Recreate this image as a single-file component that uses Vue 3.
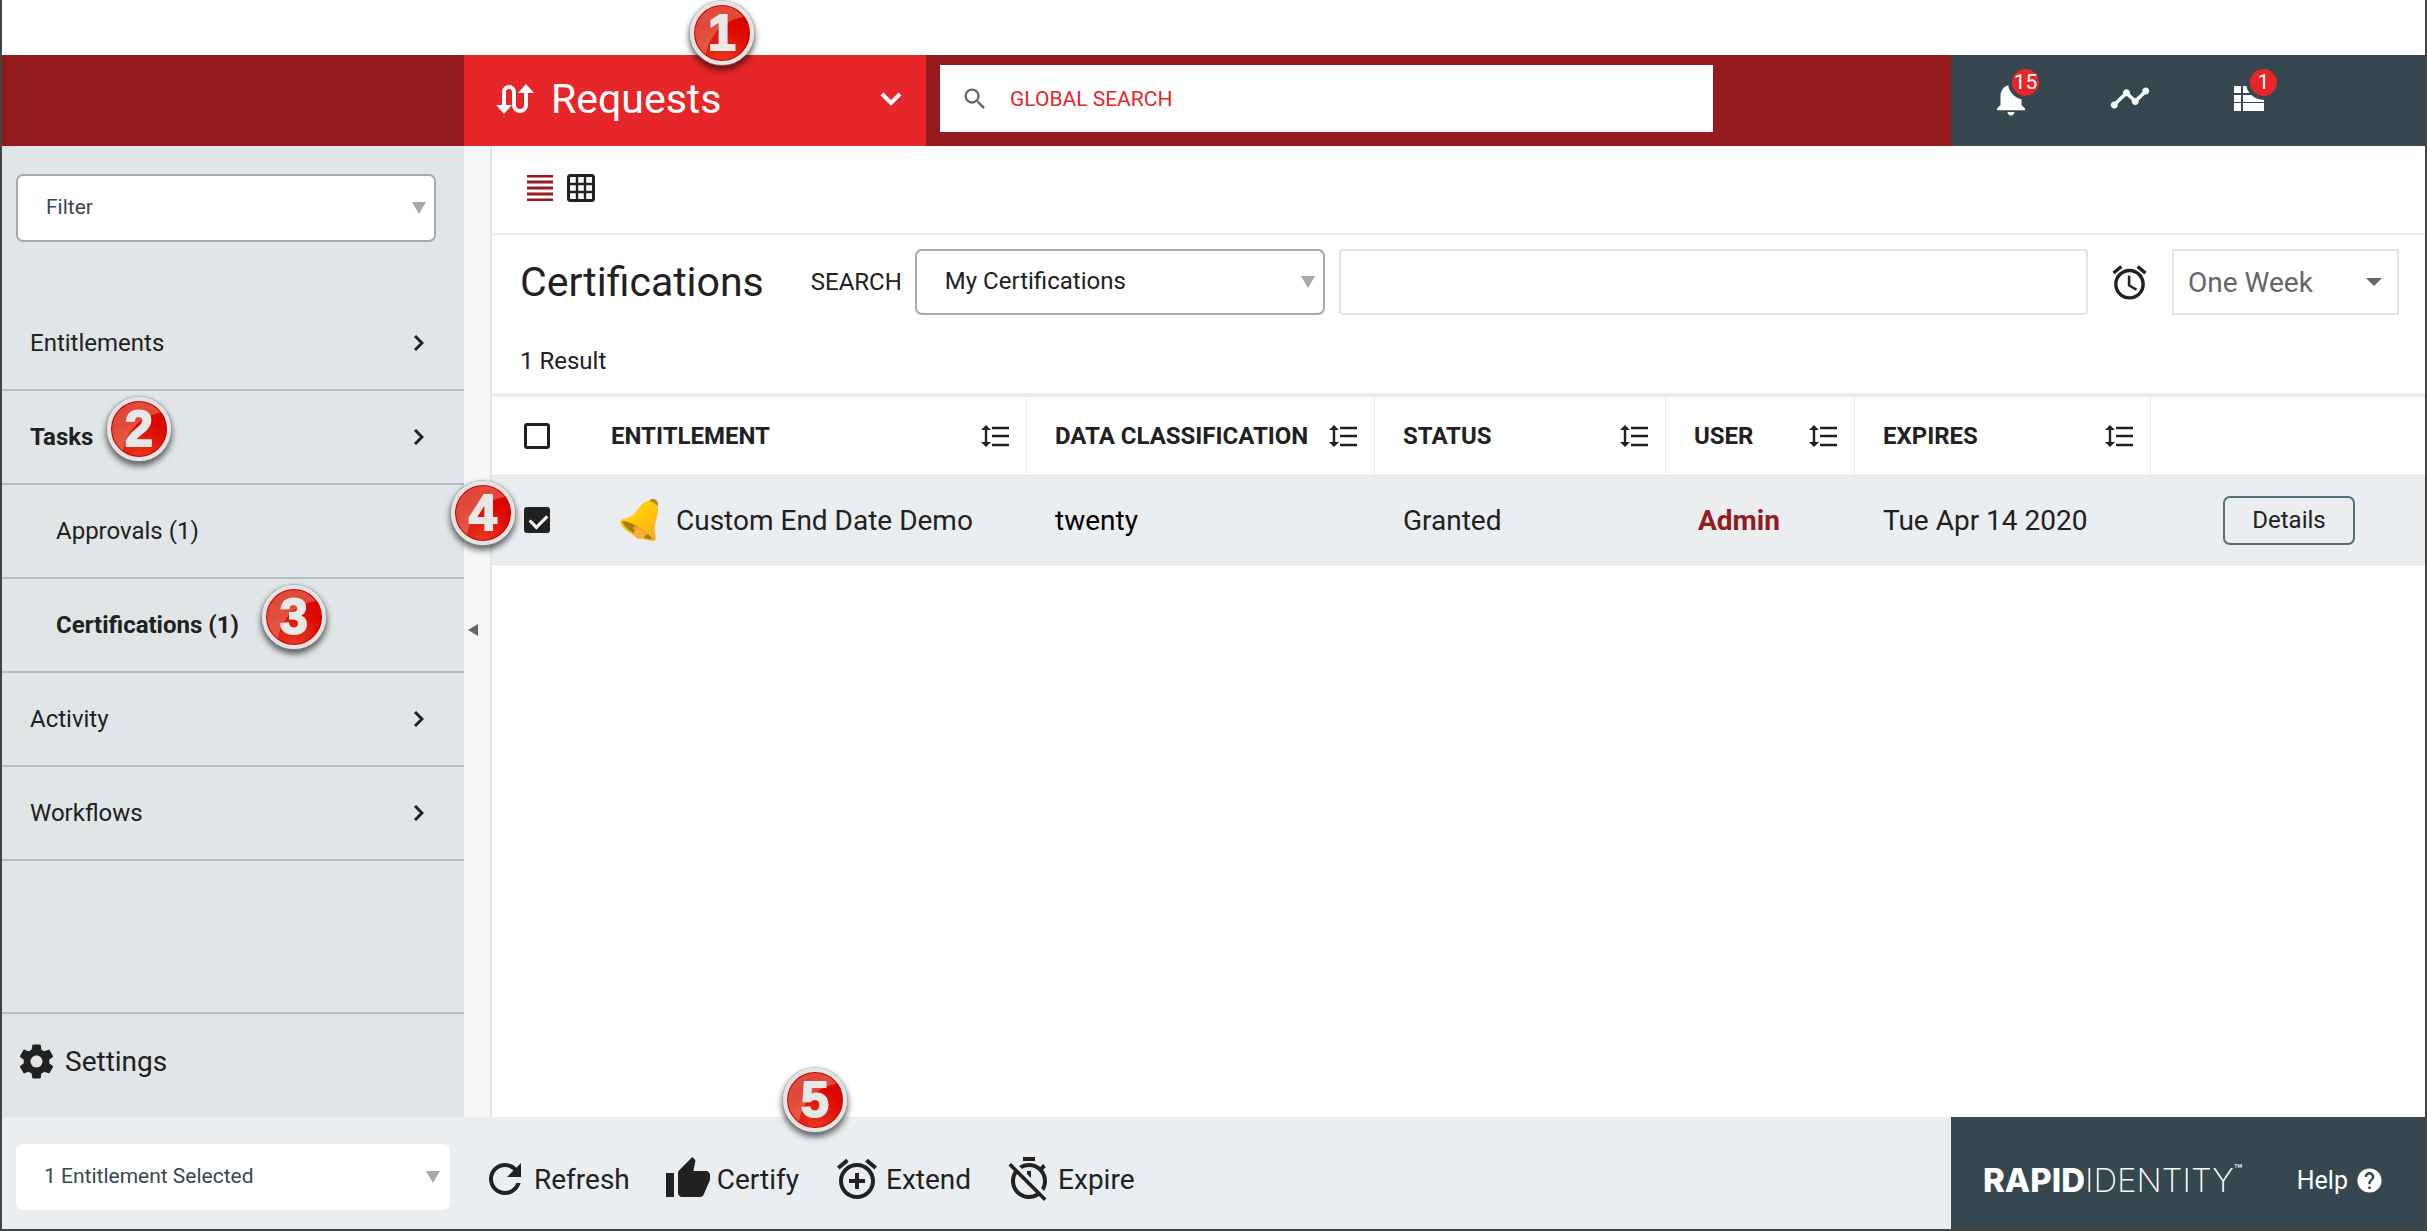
<script setup>
import { ref } from 'vue'

const navItems = [
  { label: 'Entitlements', chevron: true },
  { label: 'Tasks', chevron: true, strong: true, step: 2 },
  { label: 'Approvals (1)', child: true },
  { label: 'Certifications (1)', child: true, strong: true, step: 3 },
  { label: 'Activity', chevron: true },
  { label: 'Workflows', chevron: true }
]

const columns = [
  { label: 'ENTITLEMENT', cls: 'col-entitlement' },
  { label: 'DATA CLASSIFICATION', cls: 'col-class' },
  { label: 'STATUS', cls: 'col-status' },
  { label: 'USER', cls: 'col-user' },
  { label: 'EXPIRES', cls: 'col-expires' }
]

const actions = [
  {
    label: 'Refresh',
    path: 'M17.65 6.35C16.2 4.9 14.21 4 12 4c-4.42 0-7.99 3.58-7.99 8s3.57 8 7.99 8c3.73 0 6.84-2.55 7.73-6h-2.08c-.82 2.33-3.04 4-5.65 4-3.31 0-6-2.69-6-6s2.69-6 6-6c1.66 0 3.14.69 4.22 1.78L13 11h7V4l-2.35 2.35z'
  },
  {
    label: 'Certify',
    step: 5,
    path: 'M1 21h4V9H1v12zm22-11c0-1.1-.9-2-2-2h-6.31l.95-4.57.03-.32c0-.41-.17-.79-.44-1.06L14.17 1 7.59 7.59C7.22 7.95 7 8.45 7 9v10c0 1.1.9 2 2 2h9c.83 0 1.54-.5 1.84-1.22l3.02-7.05c.09-.23.14-.47.14-.73v-2z'
  },
  {
    label: 'Extend',
    path: 'M7.88 3.39L6.6 1.86 2 5.71l1.29 1.53 4.59-3.85zM22 5.72l-4.6-3.86-1.29 1.53 4.6 3.86L22 5.72zM12 4c-4.97 0-9 4.03-9 9s4.02 9 9 9c4.97 0 9-4.03 9-9s-4.03-9-9-9zm0 16c-3.87 0-7-3.13-7-7s3.13-7 7-7 7 3.13 7 7-3.13 7-7 7zm1-11h-2v3H8v2h3v3h2v-3h3v-2h-3V9z'
  },
  {
    label: 'Expire',
    path: 'M19.04 4.55l-1.42 1.42C16.07 4.74 14.12 4 12 4c-1.83 0-3.53.55-4.95 1.48l1.46 1.46C9.53 6.35 10.73 6 12 6c3.87 0 7 3.13 7 7 0 1.27-.35 2.47-.94 3.49l1.45 1.45C20.45 16.53 21 14.83 21 13c0-2.12-.74-4.07-1.97-5.61l1.42-1.42-1.41-1.42zM15 1H9v2h6V1zm-4 8.44l2 2V8h-2v1.44zM3.02 4L1.75 5.27 4.5 8.03C3.55 9.45 3 11.16 3 13c0 4.97 4.02 9 9 9 1.84 0 3.55-.55 4.98-1.5l2.5 2.5 1.27-1.27-7.71-7.71L3.02 4zM12 20c-3.87 0-7-3.13-7-7 0-1.28.35-2.48.95-3.52l9.56 9.56c-1.03.61-2.23.96-3.51.96z'
  }
]

const allChecked = ref(false)
const rowChecked = ref(true)
</script>

<template>
  <div class="page">
    <header class="topbar">
      <div class="brand"></div>
      <button class="module" type="button">
        <svg class="module-icon" viewBox="0 0 38 30" aria-hidden="true">
          <path d="M8 23V8a5 5 0 0 1 10 0v13a6 6 0 0 0 12 0V7" fill="none" stroke="#fff" stroke-width="4" />
          <path d="M0 21h16l-8 9zM22 9h16L30 0z" fill="#fff" />
        </svg>
        <span>Requests</span>
        <svg class="module-chevron" viewBox="0 0 22 14" aria-hidden="true">
          <path d="M2 2l9 9 9-9" fill="none" stroke="#fff" stroke-width="4" />
        </svg>
        <span class="step step-1">1</span>
      </button>
      <div class="search-zone">
        <label class="global-search">
          <svg viewBox="0 0 24 24" aria-hidden="true">
            <path fill="#666" d="M15.5 14h-.79l-.28-.27C15.41 12.59 16 11.11 16 9.5 16 5.91 13.09 3 9.5 3S3 5.91 3 9.5 5.91 16 9.5 16c1.61 0 3.09-.59 4.23-1.57l.27.28v.79l5 4.99L20.49 19l-4.99-5zm-6 0C7.01 14 5 11.99 5 9.5S7.01 5 9.5 5 14 7.01 14 9.5 11.99 14 9.5 14z" />
          </svg>
          <input type="text" placeholder="GLOBAL SEARCH" aria-label="Global search" />
        </label>
      </div>
      <div class="tools">
        <button class="tool" type="button" aria-label="Notifications">
          <svg viewBox="0 0 24 24" aria-hidden="true">
            <path fill="#fff" d="M12 22c1.1 0 2-.9 2-2h-4c0 1.1.89 2 2 2zm6-6v-5c0-3.07-1.64-5.64-4.5-6.32V4c0-.83-.67-1.5-1.5-1.5s-1.5.67-1.5 1.5v.68C7.63 5.36 6 7.92 6 11v5l-2 2v1h16v-1l-2-2z" />
          </svg>
          <span class="badge">15</span>
        </button>
        <button class="tool" type="button" aria-label="Activity">
          <svg viewBox="0 0 24 24" aria-hidden="true">
            <path fill="#fff" d="M23 8c0 1.1-.9 2-2 2-.18 0-.35-.02-.51-.07l-3.56 3.55c.05.16.07.34.07.52 0 1.1-.9 2-2 2s-2-.9-2-2c0-.18.02-.36.07-.52l-2.55-2.55c-.16.05-.34.07-.52.07s-.36-.02-.52-.07l-4.55 4.56c.05.16.07.33.07.51 0 1.1-.9 2-2 2s-2-.9-2-2 .9-2 2-2c.18 0 .35.02.51.07l4.56-4.55C8.02 9.36 8 9.18 8 9c0-1.1.9-2 2-2s2 .9 2 2c0 .18-.02.36-.07.52l2.55 2.55c.16-.05.34-.07.52-.07s.36.02.52.07l3.55-3.56C19.02 8.35 19 8.18 19 8c0-1.1.9-2 2-2s2 .9 2 2z" />
          </svg>
        </button>
        <button class="tool" type="button" aria-label="Queue">
          <svg viewBox="0 0 42 42" aria-hidden="true">
            <path fill="#fff" d="M6 9h7v7H6zM15 9h21v7H15zM6 18h7v7H6zM15 18h21v7H15zM6 26h7v8H6zM15 26h21v8H15z" />
          </svg>
          <span class="badge">1</span>
        </button>
      </div>
    </header>

    <div class="body">
      <nav class="sidebar">
        <div class="select filter">
          <select aria-label="Filter">
            <option>Filter</option>
          </select>
        </div>
        <ul class="nav">
          <li v-for="item in navItems" :key="item.label">
            <a href="#" :class="{ child: item.child, strong: item.strong }">
              <span>{{ item.label }}</span>
              <svg v-if="item.chevron" viewBox="0 0 10 16" aria-hidden="true">
                <path d="M1 1l7 7-7 7" fill="none" stroke="#212121" stroke-width="3" />
              </svg>
            </a>
            <span v-if="item.step" class="step" :class="'step-' + item.step">{{ item.step }}</span>
          </li>
        </ul>
        <a href="#" class="settings">
          <svg viewBox="0 0 24 24" aria-hidden="true">
            <path fill="#212121" d="M19.43 12.98c.04-.32.07-.64.07-.98s-.03-.66-.07-.98l2.11-1.65c.19-.15.24-.42.12-.64l-2-3.46c-.12-.22-.39-.3-.61-.22l-2.49 1c-.52-.4-1.08-.73-1.69-.98l-.38-2.65C14.46 2.18 14.25 2 14 2h-4c-.25 0-.46.18-.49.42l-.38 2.65c-.61.25-1.17.59-1.69.98l-2.49-1c-.23-.09-.49 0-.61.22l-2 3.46c-.13.22-.07.49.12.64l2.11 1.65c-.04.32-.07.65-.07.98s.03.66.07.98l-2.11 1.65c-.19.15-.24.42-.12.64l2 3.46c.12.22.39.3.61.22l2.49-1c.52.4 1.08.73 1.69.98l.38 2.65c.03.24.24.42.49.42h4c.25 0 .46-.18.49-.42l.38-2.65c.61-.25 1.17-.59 1.69-.98l2.49 1c.23.09.49 0 .61-.22l2-3.46c.12-.22.07-.49-.12-.64l-2.11-1.65zM12 15.5c-1.93 0-3.5-1.57-3.5-3.5s1.57-3.5 3.5-3.5 3.5 1.57 3.5 3.5-1.57 3.5-3.5 3.5z" />
          </svg>
          <span>Settings</span>
        </a>
      </nav>
      <button class="collapse" type="button" aria-label="Collapse sidebar">
        <svg viewBox="0 0 10 12" aria-hidden="true"><path d="M10 0v12L0 6z" fill="#666" /></svg>
      </button>

      <main class="content">
        <div class="view-switch">
          <button type="button" aria-label="List view">
            <svg class="list-icon" viewBox="0 0 26 26" aria-hidden="true">
              <path d="M0 1h26M0 7h26M0 13h26M0 19h26M0 25h26" stroke="#961b1e" stroke-width="3" />
            </svg>
          </button>
          <button type="button" aria-label="Grid view">
            <svg class="grid-icon" viewBox="0 0 28 28" aria-hidden="true">
              <rect x="1.5" y="1.5" width="25" height="25" rx="2" fill="none" stroke="#212121" stroke-width="3" />
              <path d="M10 1v26M18 1v26M1 10h26M1 18h26" stroke="#212121" stroke-width="2.4" />
            </svg>
          </button>
        </div>

        <section class="heading">
          <div class="search-row">
            <h1>Certifications</h1>
            <label class="search-label" for="scope">SEARCH</label>
            <div class="select scope">
              <select id="scope">
                <option>My Certifications</option>
              </select>
            </div>
            <input class="query" type="text" aria-label="Search text" />
            <svg class="alarm" viewBox="0 0 24 24" aria-hidden="true">
              <path fill="#212121" d="M22 5.72l-4.6-3.86-1.29 1.53 4.6 3.86L22 5.72zM7.88 3.39L6.6 1.86 2 5.71l1.29 1.53 4.59-3.85zM12.5 8H11v6l4.75 2.85.75-1.23-4-2.37V8zM12 4c-4.97 0-9 4.03-9 9s4.02 9 9 9c4.97 0 9-4.03 9-9s-4.03-9-9-9zm0 16c-3.87 0-7-3.13-7-7s3.13-7 7-7 7 3.13 7 7-3.13 7-7 7z" />
            </svg>
            <div class="select period">
              <select aria-label="Period">
                <option>One Week</option>
              </select>
            </div>
          </div>
          <p class="count">1 Result</p>
        </section>

        <table>
          <colgroup>
            <col class="col-check" />
            <col v-for="c in columns" :key="c.label" :class="c.cls" />
            <col />
          </colgroup>
          <thead>
            <tr>
              <th class="check"><input v-model="allChecked" type="checkbox" aria-label="Select all" /></th>
              <th v-for="c in columns" :key="c.label" class="sortable">
                <div class="th-inner">
                  <span>{{ c.label }}</span>
                  <button type="button" :aria-label="'Sort by ' + c.label">
                    <svg viewBox="0 0 28 22" aria-hidden="true">
                      <path d="M5 3v16" stroke="#212121" stroke-width="2.4" />
                      <path d="M0 5l5-5 5 5zM0 17l5 5 5-5z" fill="#212121" />
                      <path d="M11 3h17M11 11h17M11 20h17" stroke="#212121" stroke-width="2.4" />
                    </svg>
                  </button>
                </div>
              </th>
              <th></th>
            </tr>
          </thead>
          <tbody>
            <tr>
              <td class="check">
                <input v-model="rowChecked" type="checkbox" aria-label="Select Custom End Date Demo" />
                <span class="step step-4">4</span>
              </td>
              <td>
                <div class="entitlement">
                  <svg viewBox="0 0 38 42" aria-hidden="true">
                    <defs>
                      <linearGradient id="bell-body" x1="0" y1="0" x2="1" y2="1">
                        <stop offset="0" stop-color="#fdd835" />
                        <stop offset=".45" stop-color="#ffca05" />
                        <stop offset="1" stop-color="#f9a825" />
                      </linearGradient>
                    </defs>
                    <circle cx="33" cy="5" r="5" fill="#b08a1c" />
                    <path d="M25 3c5-3 13 1 13 8 0 8-5 14-3 24 1 4 1 7-2 7C21 41 3 33 0 23c0-3 3-3 7-4C16 17 18 7 25 3z" fill="url(#bell-body)" />
                    <path d="M2 22c6-1 28 11 30 18-8 1-27-8-30-18z" fill="#a67c12" />
                    <circle cx="20" cy="34" r="6" fill="#fbb03b" />
                    <path d="M14 27c5 1 12 5 15 8l-4 1c-3-4-8-6-12-6z" fill="#f9a825" />
                  </svg>
                  <span>Custom End Date Demo</span>
                </div>
              </td>
              <td class="dark">twenty</td>
              <td>Granted</td>
              <td><a href="#" class="user">Admin</a></td>
              <td>Tue Apr 14 2020</td>
              <td class="action-cell"><button class="details" type="button">Details</button></td>
            </tr>
          </tbody>
        </table>
      </main>
    </div>

    <footer class="footer">
      <div class="actions">
        <div class="select selected">
          <select aria-label="Selection">
            <option>1 Entitlement Selected</option>
          </select>
        </div>
        <button v-for="a in actions" :key="a.label" class="action" type="button">
          <svg viewBox="0 0 24 24" aria-hidden="true"><path fill="#212121" :d="a.path" /></svg>
          <span>{{ a.label }}</span>
          <span v-if="a.step" class="step step-5">{{ a.step }}</span>
        </button>
      </div>
      <div class="about">
        <div class="logo"><b>RAPID</b><span>IDENTITY</span><sup>™</sup></div>
        <a href="#" class="help">
          <span>Help</span>
          <svg viewBox="0 0 24 24" aria-hidden="true">
            <path fill="#fff" d="M12 2C6.48 2 2 6.48 2 12s4.48 10 10 10 10-4.48 10-10S17.52 2 12 2zm1 17h-2v-2h2v2zm2.07-7.75l-.9.92C13.45 12.9 13 13.5 13 15h-2v-.5c0-1.1.45-2.1 1.17-2.83l1.24-1.26c.37-.36.59-.86.59-1.41 0-1.1-.9-2-2-2s-2 .9-2 2H8c0-2.21 1.79-4 4-4s4 1.79 4 4c0 .88-.36 1.68-.93 2.25z" />
          </svg>
        </a>
      </div>
    </footer>
  </div>
</template>

<style>
body {
  background: #fff;
}
</style>

<style scoped>
* {
  box-sizing: border-box;
}

.page {
  display: flex;
  flex-direction: column;
  min-height: 100vh;
  padding-top: 55px;
  border: 2px solid #444;
  border-top: 0;
  color: #212121;
  font-family: Roboto, sans-serif;
  font-size: 24px;
}

button,
input,
select {
  margin: 0;
  padding: 0;
  border: 0;
  background: none;
  color: inherit;
  font: inherit;
}

a {
  color: inherit;
  text-decoration: none;
}

svg {
  display: block;
  flex: none;
}

/* Numbered call-outs */
.step {
  position: absolute;
  z-index: 2;
  display: flex;
  align-items: center;
  justify-content: center;
  width: 64px;
  height: 64px;
  border: 4px solid #e4e4e4;
  border-radius: 50%;
  background:
    radial-gradient(circle at 100% 100%, transparent 44px, rgba(230, 170, 140, 0.42) 45px) 0 0 / 100% 100%,
    radial-gradient(circle at 50% 100%, #e8391c, #dd0500 60%);
  box-shadow:
    inset 0 0 0 1px #c40000,
    0 0 1px 1px rgba(150, 150, 150, 0.5),
    0 4px 6px 1px rgba(0, 0, 0, 0.6);
  color: #e8e8e8;
  font: bold 50px/56px "Liberation Sans", sans-serif;
  -webkit-text-stroke: 2px #e8e8e8;
}

.step-1 {
  top: -54px;
  left: 226px;
}

.step-2 {
  top: 6px;
  left: 105px;
}

.step-3 {
  top: 6px;
  left: 260px;
}

.step-4 {
  top: 5px;
  left: -41px;
}

.step-5 {
  top: -87px;
  left: 119px;
}

/* Drop-downs */
.select {
  position: relative;
  flex: none;
  height: 66px;
}

.select select {
  width: 100%;
  height: 100%;
  padding: 0 28px 2px;
  border: 2px solid #a9a9a9;
  border-radius: 7px;
  appearance: none;
  background: #fff;
}

.select::after {
  content: "";
  position: absolute;
  top: 50%;
  right: 10px;
  margin-top: -6px;
  border: 7px solid transparent;
  border-top: 12px solid #a9a9a9;
  border-bottom: 0;
  pointer-events: none;
}

/* Top bar */
.topbar {
  display: flex;
  height: 91px;
  background: #961b1e;
}

.brand {
  flex: none;
  width: 462px;
}

.module {
  position: relative;
  display: flex;
  flex: none;
  align-items: center;
  gap: 17px;
  width: 462px;
  padding: 0 24px 4px 32px;
  background: #e62629;
  color: #fff;
  font-size: 41px;
}

.module-icon {
  width: 38px;
  height: 30px;
}

.module-chevron {
  width: 22px;
  height: 14px;
  margin-left: auto;
}

.search-zone {
  flex: 1;
  padding: 10px 0 0 14px;
}

.global-search {
  display: flex;
  align-items: center;
  gap: 21px;
  max-width: 773px;
  height: 67px;
  padding-left: 21px;
  background: #fff;
}

.global-search svg {
  width: 28px;
  height: 28px;
}

.global-search input {
  flex: 1;
  height: 100%;
  outline: 0;
  color: #e62629;
  font-size: 21px;
}

.global-search input::placeholder {
  color: #e62629;
  opacity: 1;
}

.tools {
  display: flex;
  flex: none;
  align-items: center;
  gap: 77px;
  width: 474px;
  padding: 0 0 6px 39px;
  background: #37474f;
}

.tool {
  position: relative;
}

.tool svg {
  width: 42px;
  height: 42px;
}

.badge {
  position: absolute;
  top: -12px;
  right: -11px;
  width: 35px;
  height: 35px;
  border: 4px solid #37474f;
  border-radius: 50%;
  background: #e62629;
  color: #fff;
  font-size: 21px;
  line-height: 27px;
  text-align: center;
}

/* Body */
.body {
  display: flex;
  flex: 1;
}

.sidebar {
  display: flex;
  flex: none;
  flex-direction: column;
  width: 462px;
  background: #e0e5e7;
}

.filter {
  width: 420px;
  height: 68px;
  margin: 28px 0 55px 14px;
  color: #37474f;
  font-size: 21px;
}

.nav {
  margin: 0;
  padding: 0;
  list-style: none;
}

.nav li {
  position: relative;
}

.nav a {
  display: flex;
  align-items: center;
  justify-content: space-between;
  height: 94px;
  padding: 0 40px 0 28px;
  border-bottom: 2px solid #b0bec5;
}

.nav a.child {
  padding-left: 54px;
}

.nav a.strong {
  font-weight: bold;
}

.nav svg {
  width: 10px;
  height: 16px;
}

.settings {
  display: flex;
  align-items: center;
  gap: 8px;
  height: 105px;
  margin-top: auto;
  padding: 0 0 8px 14px;
  border-top: 2px solid #b0bec5;
  font-size: 28px;
}

.settings svg {
  width: 41px;
  height: 41px;
}

.collapse {
  display: flex;
  flex: none;
  align-items: center;
  width: 28px;
  padding: 0 0 4px 4px;
  border-right: 2px solid #e0e5e7;
  background: #f4f6f8;
}

.collapse svg {
  width: 10px;
  height: 12px;
}

.content {
  flex: 1;
  min-width: 0;
}

.view-switch {
  display: flex;
  align-items: center;
  gap: 14px;
  height: 89px;
  padding: 0 0 4px 35px;
  border-bottom: 2px solid #eaeef1;
}

.list-icon {
  width: 26px;
  height: 26px;
}

.grid-icon {
  width: 28px;
  height: 28px;
}

.heading {
  padding: 14px 26px 0 28px;
}

.search-row {
  display: flex;
  align-items: center;
}

h1 {
  margin: 0 47px 0 0;
  font-size: 41px;
  font-weight: normal;
}

.search-label {
  margin-right: 13px;
}

.scope {
  width: 410px;
  margin-right: 14px;
}

.query {
  flex: 1;
  min-width: 0;
  height: 66px;
  border: 2px solid #e0e5e7;
  border-radius: 4px;
}

.alarm {
  width: 41px;
  height: 41px;
  margin: 0 22px 0 21px;
}

.period {
  width: 227px;
  color: #666;
  font-size: 28px;
}

.period select {
  padding: 0 14px;
  border-color: #e0e5e7;
  border-radius: 0;
}

.period::after {
  right: 17px;
  margin-top: -4px;
  border-width: 8px 8px 0;
  border-top-color: #666;
}

.count {
  margin: 33px 0 19px;
  line-height: 26px;
}

/* Results */
table {
  width: 100%;
  border-top: 4px solid #eaeef1;
  border-spacing: 0;
  table-layout: fixed;
}

.col-check {
  width: 91px;
}

.col-entitlement {
  width: 444px;
}

.col-class {
  width: 348px;
}

.col-status {
  width: 291px;
}

.col-user {
  width: 189px;
}

.col-expires {
  width: 296px;
}

th,
td {
  padding: 0 0 0 28px;
  text-align: left;
}

th {
  height: 79px;
  border-bottom: 1px solid #e0e5e7;
}

th.sortable {
  border-right: 1px solid #eaeef1;
}

td {
  position: relative;
  height: 89px;
  border-bottom: 1px solid #dde3e6;
  background: #eaeef1;
  font-size: 28px;
}

.dark {
  color: #000;
}

.check {
  padding-left: 32px;
}

.check input {
  position: relative;
  display: block;
  width: 26px;
  height: 26px;
  border: 3px solid #212121;
  border-radius: 3px;
  appearance: none;
}

.check input:checked {
  background: #212121;
}

.check input:checked::after {
  content: "";
  position: absolute;
  top: 1px;
  left: 6px;
  width: 8px;
  height: 14px;
  border: solid #fff;
  border-width: 0 3px 3px 0;
  transform: rotate(45deg);
}

.th-inner {
  display: flex;
  align-items: center;
  justify-content: space-between;
  padding-right: 17px;
}

.th-inner svg {
  width: 28px;
  height: 22px;
}

.entitlement {
  display: flex;
  align-items: center;
  gap: 18px;
  padding-left: 9px;
}

.entitlement svg {
  width: 38px;
  height: 42px;
}

.user {
  padding-left: 4px;
  color: #961b1e;
  font-weight: bold;
}

.action-cell {
  padding-left: 72px;
}

.details {
  width: 132px;
  height: 49px;
  border: 2px solid #546e7a;
  border-radius: 7px;
  font-size: 24px;
}

/* Footer */
.footer {
  display: flex;
  height: 112px;
  background: #eaeef1;
}

.actions {
  display: flex;
  flex: 1;
  align-items: center;
  gap: 34px;
  padding: 12px 0 0 14px;
}

.selected {
  width: 434px;
  margin: 0 -3px 4px 0;
  color: #37474f;
  font-size: 21px;
}

.selected select {
  padding-left: 26px;
  border-color: #fff;
}

.action {
  position: relative;
  display: flex;
  align-items: center;
  gap: 5px;
  font-size: 28px;
}

.action svg {
  width: 48px;
  height: 48px;
}

.about {
  display: flex;
  flex: none;
  align-items: center;
  justify-content: space-between;
  width: 474px;
  padding: 14px 41px 0 32px;
  background: #37474f;
  color: #fff;
}

.logo {
  display: flex;
  font-family: Inter, sans-serif;
  font-size: 33px;
}

.logo b {
  font-weight: 800;
}

.logo span {
  font-weight: 200;
}

.logo sup {
  font-size: 14px;
  line-height: 20px;
}

.help {
  display: flex;
  align-items: center;
  gap: 7px;
  font-size: 25px;
}

.help svg {
  width: 29px;
  height: 29px;
}
</style>
